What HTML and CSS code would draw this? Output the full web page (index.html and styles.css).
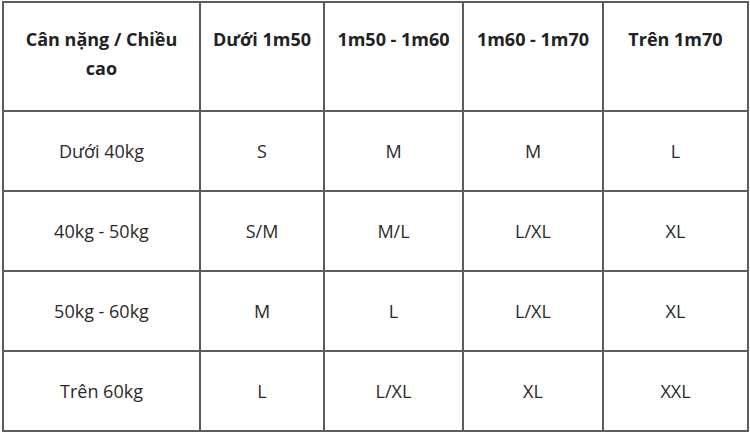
FILE: index.html
```html
<!DOCTYPE html>
<html lang="vi">
<head>
<meta charset="utf-8">
<title>Bảng size</title>
<link rel="stylesheet" href="styles.css">
</head>
<body>
<table class="size-table">
  <colgroup>
    <col class="c1"><col class="c2"><col class="c3"><col class="c4"><col class="c5">
  </colgroup>
  <thead>
    <tr class="head-row">
      <th class="corner">Cân nặng / Chiều cao</th>
      <th>Dưới 1m50</th>
      <th>1m50 - 1m60</th>
      <th>1m60 - 1m70</th>
      <th>Trên 1m70</th>
    </tr>
  </thead>
  <tbody>
    <tr><td>Dưới 40kg</td><td>S</td><td>M</td><td>M</td><td>L</td></tr>
    <tr><td>40kg - 50kg</td><td>S/M</td><td>M/L</td><td>L/XL</td><td>XL</td></tr>
    <tr><td>50kg - 60kg</td><td>M</td><td>L</td><td>L/XL</td><td>XL</td></tr>
    <tr><td>Trên 60kg</td><td>L</td><td>L/XL</td><td>XL</td><td>XXL</td></tr>
  </tbody>
</table>
</body>
</html>
```
FILE: styles.css
```css
html, body {
  margin: 0;
  padding: 0;
  background: #ffffff;
}
body {
  padding: 1px 0 0 2px;
  font-family: "Open Sans", "Noto Sans", sans-serif;
  color: #222222;
}
.size-table {
  border-collapse: collapse;
  table-layout: fixed;
  width: 745px;
}
.c1 { width: 197px; }
.c2 { width: 124px; }
.c3 { width: 139px; }
.c4 { width: 140px; }
.c5 { width: 145px; }
.size-table th,
.size-table td {
  border: 2px solid #5c5c5c;
  text-align: center;
  padding: 0 2px;
}
.size-table th {
  font-size: 18px;
  font-weight: 700;
  line-height: 29px;
  vertical-align: top;
  padding-top: 22px;
  padding-bottom: 27px;
}
.size-table th.corner {
  padding-left: 14px;
  padding-right: 14px;
}
.size-table td {
  height: 78px;
  font-size: 18px;
  line-height: 24px;
  vertical-align: middle;
  padding-top: 0;
  padding-bottom: 0;
  color: #2a2a2a;
}
```
